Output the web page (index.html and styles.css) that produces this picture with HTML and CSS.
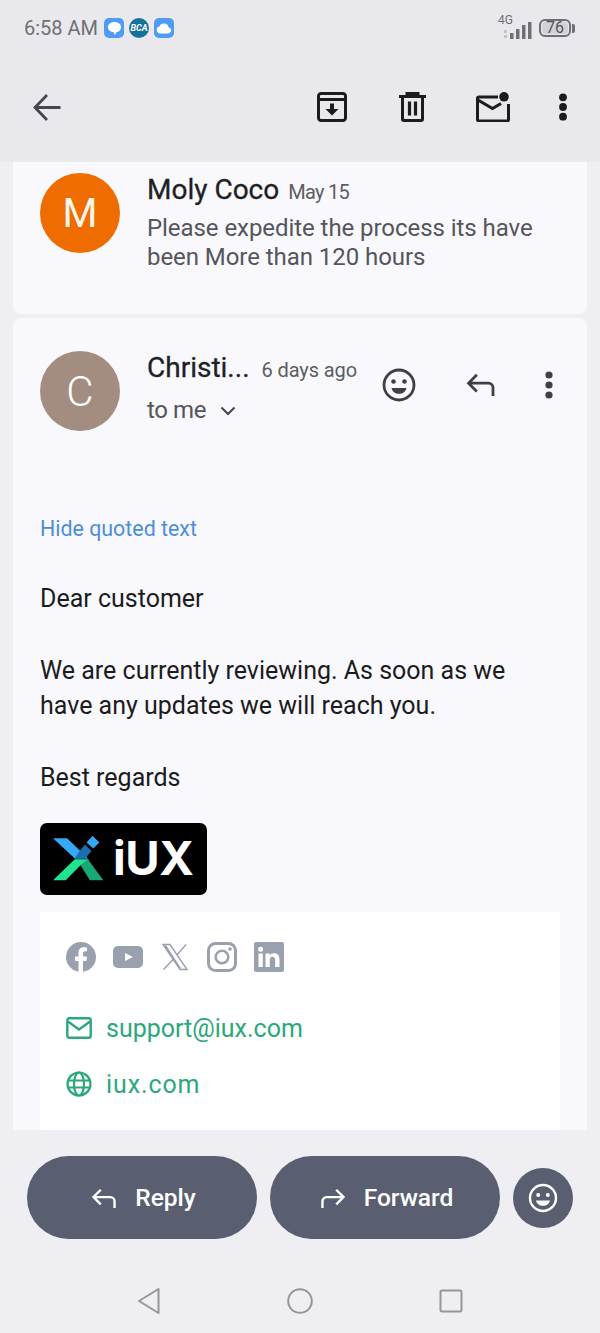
FILE: index.html
```html
<!DOCTYPE html>
<html lang="en">
<head>
    <meta charset="UTF-8">
    <meta name="viewport" content="width=device-width, initial-scale=1.0">
    <title>Mail thread</title>
    <link rel="stylesheet" href="styles.css">
</head>
<body>
    <div class="phone">
        <div class="top">
            <div class="status">
                <span class="clock">6:58 AM</span>
                <div class="notif">
                    <span class="app app-chat">
                        <svg viewBox="0 0 18 18" width="17" height="17"><path d="M9 2c4.200 0 7 2.400 7 5.700 0 3-2.300 5-5 5.300l-1.600 3.200-1.300-3.300C5 12.500 2 10.700 2 7.700 2 4.400 4.800 2 9 2z" fill="#fff"/></svg>
                    </span>
                    <span class="app app-bca">BCA</span>
                    <span class="app app-cloud">
                        <svg viewBox="0 0 18 18" width="18" height="18"><path d="M5 14.500a3.500 3.500 0 0 1-.6-6.900 4.800 4.800 0 0 1 9.200.6 3.200 3.200 0 0 1 0 6.300z" fill="#fff"/></svg>
                    </span>
                </div>
                <div class="sys">
                    <div class="net">
                        <span class="net-label">4G</span>
                        <svg viewBox="0 0 30 18" width="30" height="18"><g fill="#6f6f74"><rect x="1" y="14" width="3" height="3" fill="#c4c4c8"/><rect x="1" y="9" width="3" height="3" fill="#c4c4c8"/><rect x="7" y="12" width="3.500" height="6"/><rect x="13" y="8" width="3.500" height="10"/><rect x="19" y="4" width="3.500" height="14"/><rect x="25" y="1" width="3.500" height="17"/></g></svg>
                    </div>
                    <div class="battery"><span class="battery-level">76</span></div>
                    <span class="battery-tip"></span>
                </div>
            </div>
            <div class="toolbar">
                <svg class="back" viewBox="0 0 30 30" width="30" height="30"><path d="M28.500 15.500H4M15 3 3 15.500 15 28" fill="none" stroke="#46464c" stroke-width="2.800"/></svg>
                <div class="actions">
                    <svg class="act" viewBox="0 0 30 30" width="30" height="30"><path d="M4 1.500h22A2.500 2.500 0 0 1 28.500 4v22a2.500 2.500 0 0 1-2.500 2.500H4A2.500 2.500 0 0 1 1.500 26V4A2.500 2.500 0 0 1 4 1.500zM1.500 7.500h27" fill="none" stroke="#1c1c20" stroke-width="3"/><path d="M13 11.500h4v5.500h4.500L15 23.500 8.500 17H13z" fill="#1c1c20"/></svg>
                    <svg class="act" viewBox="0 0 27 30" width="27" height="30"><path d="M0 4.500h27M8 4V1.500h11V4" fill="none" stroke="#1c1c20" stroke-width="3"/><path d="M3.500 5v22A1.500 1.500 0 0 0 5 28.500h17a1.500 1.500 0 0 0 1.500-1.500V5" fill="none" stroke="#1c1c20" stroke-width="3"/><path d="M10.500 9.500v14M16.500 9.500v14" stroke="#1c1c20" stroke-width="3.200"/></svg>
                    <svg class="act" viewBox="0 0 34 30" width="34" height="30"><path d="M22 5H3a1.500 1.500 0 0 0-1.500 1.500v21A1.500 1.500 0 0 0 3 29h28a1.500 1.500 0 0 0 1.500-1.500V12" fill="none" stroke="#1c1c20" stroke-width="3"/><path d="M2 8l14.500 8.500L25 11.500" fill="none" stroke="#1c1c20" stroke-width="3"/><circle cx="28" cy="4.800" r="4.800" fill="#1c1c20"/></svg>
                    <svg class="act" viewBox="0 0 10 28" width="10" height="28"><g fill="#1c1c20"><circle cx="5" cy="4.300" r="3.900"/><circle cx="5" cy="14" r="3.900"/><circle cx="5" cy="23.700" r="3.900"/></g></svg>
                </div>
            </div>
        </div>

        <div class="thread">
            <div class="card card-collapsed">
                <div class="avatar avatar-m">M</div>
                <div class="msg-head">
                    <div class="from-line">
                        <span class="from">Moly Coco</span>
                        <span class="when when-short">May 15</span>
                    </div>
                    <p class="snippet">Please expedite the process its have been More than 120 hours</p>
                </div>
            </div>

            <div class="card card-open">
                <div class="open-head">
                    <div class="avatar avatar-c">C</div>
                    <div class="open-meta">
                        <div class="from-line">
                            <span class="from">Christi...</span>
                            <span class="when when-long">6 days ago</span>
                        </div>
                        <div class="to-line">
                            <span>to me</span>
                            <svg viewBox="0 0 16 10" width="16" height="10"><path d="M1.500 1.500 8 8l6.500-6.500" fill="none" stroke="#46464c" stroke-width="2"/></svg>
                        </div>
                    </div>
                    <div class="msg-actions">
                        <svg viewBox="0 0 34 34" width="34" height="34"><circle cx="17" cy="17" r="15" fill="none" stroke="#3f3f45" stroke-width="2.800"/><circle cx="11.500" cy="13.500" r="2.300" fill="#3f3f45"/><circle cx="22.500" cy="13.500" r="2.300" fill="#3f3f45"/><path d="M9.500 20h15c-.8 3.600-3.700 5.800-7.500 5.800S10.300 23.600 9.500 20z" fill="#3f3f45"/></svg>
                        <svg viewBox="0 0 32 26" width="30" height="24"><path d="M11.500 2 2.500 11l9 9M3 11h21a5 5 0 0 1 5 5v9" fill="none" stroke="#3f3f45" stroke-width="3"/></svg>
                        <svg viewBox="0 0 10 30" width="10" height="30"><g fill="#3f3f45"><circle cx="5" cy="5" r="3.600"/><circle cx="5" cy="15" r="3.600"/><circle cx="5" cy="25" r="3.600"/></g></svg>
                    </div>
                </div>

                <a class="quoted">Hide quoted text</a>

                <div class="body-text">
                    <p>Dear customer</p>
                    <p>We are currently reviewing. As soon as we have any updates we will reach you.</p>
                    <p>Best regards</p>
                </div>

                <div class="logo">
                    <svg viewBox="40 30 152 137" width="51" height="46">
                        <path d="M40 40h42l63 60h-40z" fill="#35a9f5"/>
                        <path d="M116 82l19-24 20 20-20 22h-30z" fill="#1c6fae"/>
                        <path d="M158 32l20 20-18 18-20-18z" fill="#35a9f5"/>
                        <path d="M40 165l65-63h43l-26 18-44 45z" fill="#1fe292"/>
                        <path d="M122 120l22-18 46 63h-40z" fill="#17a874"/>
                    </svg>
                    <span class="logo-word">iUX</span>
                </div>

                <div class="signature">
                    <div class="socials">
                        <svg viewBox="0 0 30 30" width="30" height="30"><circle cx="15" cy="15" r="15" fill="#9aa1ae"/><path d="M12.500 30V19H9v-4.500h3.500V11c0-3.700 2.200-5.700 5.500-5.700 1.500 0 3 .3 3 .3v3.700h-1.700c-1.700 0-2.300 1.100-2.300 2.200v3h4l-.6 4.500h-3.400v11z" fill="#fff"/></svg>
                        <svg viewBox="0 0 30 30" width="30" height="30"><rect y="4" width="30" height="22" rx="5" fill="#9aa1ae"/><path d="M12 11l8 4-8 4z" fill="#fff"/></svg>
                        <svg viewBox="0 0 30 30" width="30" height="30"><path d="M3 2.500h7L27 27.500h-7zM26 2.500 16.500 13.500M13 17.500 3.500 27.500M5.500 3.500l14.800 23" fill="none" stroke="#9aa1ae" stroke-width="1.400"/></svg>
                        <svg viewBox="0 0 30 30" width="30" height="30"><rect x="1.500" y="1.500" width="27" height="27" rx="7" fill="none" stroke="#9aa1ae" stroke-width="3"/><circle cx="15" cy="15" r="6.300" fill="none" stroke="#9aa1ae" stroke-width="2.600"/><circle cx="23" cy="7" r="1.800" fill="#9aa1ae"/></svg>
                        <svg viewBox="0 0 30 30" width="30" height="30"><rect width="30" height="30" rx="2" fill="#9aa1ae"/><path d="M4.500 11.500h4.300V25H4.500zM6.600 4.800a2.500 2.500 0 1 1 0 5 2.500 2.500 0 0 1 0-5zM11.500 11.500h4.100v1.900c.7-1.300 2.200-2.200 4.300-2.200 4.300 0 5.600 2.700 5.600 6.600V25h-4.300v-6.400c0-2-.4-3.800-2.600-3.800s-2.800 1.700-2.800 3.700V25h-4.300z" fill="#fff"/></svg>
                    </div>
                    <div class="contact">
                        <svg viewBox="0 0 26 22" width="26" height="22"><rect x="1.300" y="1.300" width="23.400" height="19.400" rx="2" fill="none" stroke="#2aa87a" stroke-width="2.400"/><path d="M2 4.500l11 8 11-8" fill="none" stroke="#2aa87a" stroke-width="2.400"/></svg>
                        <span>support@iux.com</span>
                    </div>
                    <div class="contact contact-site">
                        <svg viewBox="0 0 26 26" width="26" height="26"><g fill="none" stroke="#2aa87a" stroke-width="2.200"><circle cx="13" cy="13" r="11.500"/><ellipse cx="13" cy="13" rx="5" ry="11.500"/><path d="M2 9.500h22M2 16.500h22"/></g></svg>
                        <span>iux.com</span>
                    </div>
                </div>
            </div>
        </div>

        <div class="reply-bar">
            <button class="pill">
                <svg viewBox="0 0 28 24" width="26" height="22"><path d="M10.500 3 2.500 11l8 8M3 11h18a4.500 4.500 0 0 1 4.500 4.500V23" fill="none" stroke="#fff" stroke-width="2.600"/></svg>
                <span>Reply</span>
            </button>
            <button class="pill">
                <svg viewBox="0 0 28 24" width="26" height="22"><path d="M17.500 3l8 8-8 8M25 11H7a4.500 4.500 0 0 0-4.500 4.500V23" fill="none" stroke="#fff" stroke-width="2.600"/></svg>
                <span>Forward</span>
            </button>
            <button class="round">
                <svg viewBox="0 0 30 30" width="30" height="30"><circle cx="15" cy="15" r="13" fill="none" stroke="#fff" stroke-width="2.400"/><circle cx="10.200" cy="12" r="2" fill="#fff"/><circle cx="19.800" cy="12" r="2" fill="#fff"/><path d="M8 17.500h14c-.7 3.300-3.400 5.300-7 5.300s-6.300-2-7-5.300z" fill="#fff"/></svg>
            </button>
        </div>

        <div class="navbar">
            <svg viewBox="0 0 24 28" width="24" height="28"><path d="M21.500 2 2 14l19.500 12z" fill="none" stroke="#96969a" stroke-width="2" stroke-linejoin="round"/></svg>
            <svg viewBox="0 0 26 26" width="26" height="26"><circle cx="13" cy="13" r="11.800" fill="none" stroke="#96969a" stroke-width="2"/></svg>
            <svg viewBox="0 0 24 24" width="24" height="24"><rect x="1.500" y="1.500" width="21" height="21" rx="1.500" fill="none" stroke="#96969a" stroke-width="2"/></svg>
        </div>
    </div>
</body>
</html>
```

FILE: styles.css
```css
* {
    box-sizing: border-box;
}
html, body {
    margin: 0;
    padding: 0;
}
body {
    font-family: Roboto, "Noto Sans", sans-serif;
    background: #efeef3;
}
.phone {
    width: 600px;
    height: 1333px;
    display: flex;
    flex-direction: column;
    overflow: hidden;
}

/* status bar and toolbar */
.top {
    background: #e9e8ed;
    height: 162px;
    flex: none;
}
.status {
    height: 56px;
    display: flex;
    align-items: center;
    padding: 0 25px 0 24px;
}
.clock {
    font-size: 20px;
    color: #6f6f74;
}
.notif {
    display: flex;
    gap: 5px;
    margin-left: 6px;
}
.app {
    width: 20px;
    height: 20px;
    border-radius: 5px;
    background: #4f9bf5;
    display: flex;
    align-items: center;
    justify-content: center;
}
.app-bca {
    border-radius: 50%;
    background: #14729f;
    color: #fff;
    font-size: 9px;
    font-weight: 700;
    font-style: italic;
}
.sys {
    margin-left: auto;
    display: flex;
    align-items: center;
}
.net {
    position: relative;
    width: 33px;
    height: 22px;
    padding-top: 4px;
}
.net-label {
    position: absolute;
    left: -2px;
    top: -4px;
    font-size: 12px;
    color: #6f6f74;
}
.net svg {
    display: block;
    margin-left: 3px;
}
.battery {
    width: 32px;
    height: 18px;
    border: 2px solid #6f6f74;
    border-radius: 6px;
    margin-left: 6px;
    padding: 1px;
    display: flex;
}
.battery-level {
    flex: 1;
    background: #d3d3d6;
    border-radius: 3px;
    font-size: 16px;
    line-height: 12px;
    text-align: center;
    color: #55555a;
}
.battery-tip {
    width: 3px;
    height: 9px;
    background: #6f6f74;
    border-radius: 0 2px 2px 0;
    margin-left: 1px;
}
.toolbar {
    display: flex;
    align-items: center;
    height: 102px;
    padding: 0 32px;
}
.actions {
    margin-left: auto;
    display: flex;
    align-items: center;
}
.act:nth-child(1) {
    margin-right: 52px;
}
.act:nth-child(2) {
    margin-right: 50px;
}
.act:nth-child(3) {
    margin-right: 48px;
}

/* message cards */
.thread {
    flex: 1;
    min-height: 0;
    overflow: hidden;
    padding: 0 13px;
}
.card {
    background: #f8f8fd;
}
.card-collapsed {
    height: 152px;
    border-radius: 0 0 8px 8px;
    padding: 11px 27px 0;
    display: flex;
}
.card-open {
    margin-top: 4px;
    border-radius: 8px 8px 0 0;
    padding: 33px 27px 0;
}
.avatar {
    width: 80px;
    height: 80px;
    border-radius: 50%;
    flex: none;
    color: #fbf6ec;
    font-size: 40px;
    display: flex;
    align-items: center;
    justify-content: center;
}
.avatar-m {
    background: #ef6c00;
}
.avatar-c {
    background: #a38d81;
    color: #fff;
    font-size: 42px;
    font-weight: 300;
}
.msg-head {
    margin-left: 27px;
}
.from-line {
    display: flex;
    align-items: baseline;
    line-height: 34px;
}
.from {
    font-size: 28px;
    color: #1f1f24;
    -webkit-text-stroke: 0.3px #1f1f24;
}
.when {
    font-size: 20px;
    color: #5d5d63;
    margin-left: 9px;
}
.when-short {
    letter-spacing: -0.7px;
}
.when-long {
    margin-left: 12px;
    letter-spacing: -0.1px;
}
.snippet {
    margin: 5px 0 0;
    font-size: 24px;
    letter-spacing: -0.06px;
    line-height: 29px;
    color: #55555b;
}
.open-head {
    display: flex;
    height: 80px;
}
.open-meta {
    margin-left: 27px;
}
.to-line {
    display: flex;
    align-items: center;
    gap: 14px;
    margin-top: 9px;
    font-size: 24px;
    letter-spacing: -0.4px;
    line-height: 29px;
    color: #55555b;
}
.msg-actions {
    margin-left: auto;
    margin-right: 6px;
    display: flex;
    align-items: center;
    height: 68px;
}
.msg-actions svg:nth-child(1) {
    margin-right: 50px;
}
.msg-actions svg:nth-child(2) {
    margin-right: 48px;
}

/* body of the open message */
.quoted {
    display: block;
    margin-top: 85px;
    font-size: 21.400px;
    line-height: 26px;
    color: #4a8fd9;
}
.body-text {
    margin-top: 39px;
    font-size: 25px;
    line-height: 35px;
    color: #1c1c20;
}
.body-text p {
    margin: 0 0 37px;
}
.logo {
    width: 167px;
    height: 72px;
    background: #000;
    border-radius: 7px;
    margin-top: -9px;
    padding: 12px 13px 0;
    display: flex;
    gap: 9px;
}
.logo-word {
    font-family: Inter, Roboto, sans-serif;
    font-size: 47px;
    font-weight: 700;
    color: #fff;
    line-height: 46px;
    letter-spacing: -0.5px;
}
.signature {
    margin-top: 17px;
    background: #fff;
    height: 240px;
    padding: 30px 26px;
}
.socials {
    display: flex;
    gap: 17px;
    margin-bottom: 28px;
}
.contact {
    display: flex;
    align-items: center;
    gap: 14px;
    height: 56px;
    font-size: 25px;
    color: #2aa87a;
}
.contact-site {
    letter-spacing: 0.9px;
}
.contact svg {
    flex: none;
}

/* reply buttons */
.reply-bar {
    flex: none;
    height: 138px;
    padding: 26px 27px 0;
    display: flex;
    align-items: flex-start;
}
.pill {
    width: 230px;
    height: 83px;
    border: none;
    border-radius: 42px;
    background: #595f70;
    color: #fff;
    font-family: inherit;
    font-size: 24.500px;
    font-weight: 500;
    display: flex;
    align-items: center;
    justify-content: center;
    gap: 18px;
    padding: 0 0 0 3px;
    margin-right: 13px;
}
.round {
    width: 60px;
    height: 60px;
    border: none;
    border-radius: 50%;
    background: #595f70;
    padding: 0;
    margin-top: 12px;
    display: flex;
    align-items: center;
    justify-content: center;
}
.navbar {
    flex: none;
    height: 65px;
    display: flex;
    justify-content: center;
    gap: 126px;
    align-items: center;
}
```
